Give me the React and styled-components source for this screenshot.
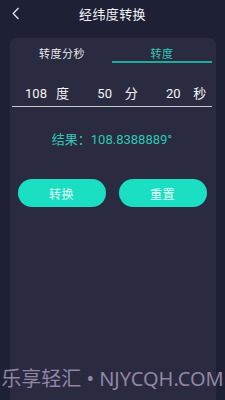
import React, { useState } from 'react'
import styled, { createGlobalStyle } from 'styled-components'

const GlobalStyle = createGlobalStyle`
    html, body {
        margin: 0;
        padding: 0;
        background: #1e2035;
    }
    * {
        box-sizing: border-box;
    }
`

const Page = styled.div`
    position: relative;
    width: 225px;
    height: 400px;
    overflow: hidden;
    display: flex;
    flex-direction: column;
    background: #1e2035;
    font-family: Roboto, "Noto Sans CJK SC", sans-serif;
    color: #ffffff;
`

const Header = styled.div`
    position: relative;
    height: 28px;
    display: flex;
    align-items: center;
    justify-content: center;
    flex-shrink: 0;
`

const BackButton = styled.button`
    position: absolute;
    left: 9px;
    top: 5px;
    width: 14px;
    height: 16px;
    padding: 0;
    border: none;
    background: transparent;
    display: flex;
    align-items: center;
    justify-content: center;
`

const Title = styled.h1`
    margin: 0 0 1px;
    font-size: 13px;
    font-weight: 400;
    letter-spacing: 0.4px;
    color: #f2f2f5;
`

const Card = styled.div`
    flex: 1;
    margin: 10px 9px 0 10px;
    padding: 0 4px 0 2px;
    background: #2a2a40;
    border-radius: 6px 6px 0 0;
`

const Tabs = styled.div`
    display: flex;
`

const Tab = styled.div`
    flex: 1;
    padding-top: 10px;
    line-height: 13px;
    font-size: 11px;
    text-align: center;
    letter-spacing: 0.5px;
    color: ${(props) => (props.active ? '#35c8b7' : '#e8e8ee')};
    border-bottom: 2px solid ${(props) => (props.active ? '#22ab9d' : 'transparent')};
    cursor: pointer;
`

const InputRow = styled.div`
    display: flex;
    margin-top: 21px;
    height: 23px;
    padding-bottom: 2px;
    border-bottom: 1px solid #c9c9d2;
`

const Field = styled.div`
    flex: 1;
    display: flex;
    align-items: center;
    padding-left: ${(props) => props.pad}px;
    gap: 5px;
`

const ValueInput = styled.input`
    width: 30px;
    padding: 0;
    border: none;
    outline: none;
    background: transparent;
    font-family: Roboto, "Noto Sans CJK SC", sans-serif;
    font-size: 13px;
    line-height: 20px;
    text-align: center;
    color: #f4f4f6;
`

const Unit = styled.span`
    font-size: 13px;
    line-height: 20px;
    color: #f4f4f6;
`

const Result = styled.div`
    margin-top: 24px;
    text-align: center;
    font-size: 13px;
    line-height: 18px;
    color: #2fc6b5;
`

const Buttons = styled.div`
    display: flex;
    justify-content: center;
    gap: 13px;
    margin-top: 30px;
`

const ActionButton = styled.button`
    width: 88px;
    height: 28px;
    border: none;
    border-radius: 14px;
    background: #1bdfc3;
    color: #e6faf6;
    font-family: "Noto Sans CJK SC", sans-serif;
    font-size: 12px;
    letter-spacing: 0.5px;
    cursor: pointer;
`

const Watermark = styled.div`
    position: absolute;
    left: 0;
    right: 0;
    top: 365px;
    text-align: center;
    white-space: nowrap;
    font-family: "Noto Sans", "Noto Sans CJK SC", sans-serif;
    font-size: 20px;
    line-height: 28px;
    color: #9d90b2;
    opacity: 0.9;
    pointer-events: none;
`

const fields = [
    { unit: '度', value: '108', pad: 9 },
    { unit: '分', value: '50', pad: 15 },
    { unit: '秒', value: '20', pad: 15 },
]

const App = () => {
    const [tab, setTab] = useState(1)

    return (
        <Page>
            <GlobalStyle />
            <Header>
                <BackButton>
                    <svg width="8" height="13" viewBox="0 0 8 13">
                        <polyline points="6.5,1 1.2,6.5 6.5,12" fill="none" stroke="#e6e6ee" strokeWidth="1.3" />
                    </svg>
                </BackButton>
                <Title>经纬度转换</Title>
            </Header>
            <Card>
                <Tabs>
                    <Tab active={tab === 0} onClick={() => setTab(0)}>转度分秒</Tab>
                    <Tab active={tab === 1} onClick={() => setTab(1)}>转度</Tab>
                </Tabs>
                <InputRow>
                    {fields.map((f) => (
                        <Field key={f.unit} pad={f.pad}>
                            <ValueInput defaultValue={f.value} />
                            <Unit>{f.unit}</Unit>
                        </Field>
                    ))}
                </InputRow>
                <Result>结果：108.8388889°</Result>
                <Buttons>
                    <ActionButton>转换</ActionButton>
                    <ActionButton>重置</ActionButton>
                </Buttons>
            </Card>
            <Watermark>乐享轻汇 • NJYCQH.COM</Watermark>
        </Page>
    )
}

export default App
